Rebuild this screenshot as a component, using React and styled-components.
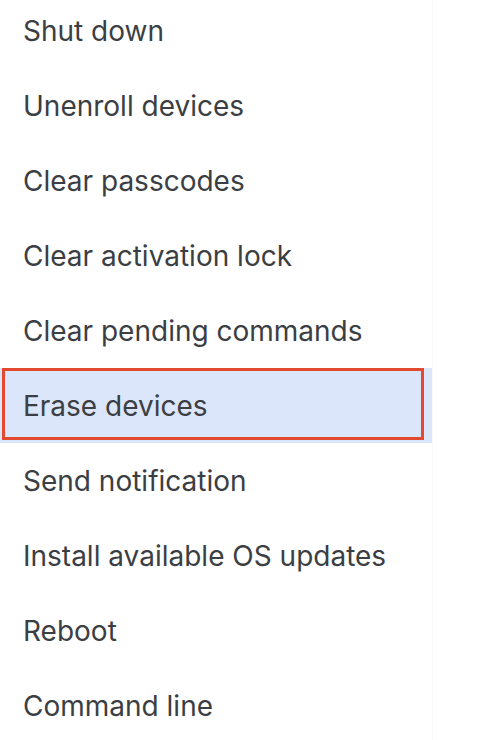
import React from 'react'
import styled, { createGlobalStyle } from 'styled-components'

const actions = [
  'Shut down',
  'Unenroll devices',
  'Clear passcodes',
  'Clear activation lock',
  'Clear pending commands',
  'Erase devices',
  'Send notification',
  'Install available OS updates',
  'Reboot',
  'Command line',
]

const selected = 'Erase devices'

const Global = createGlobalStyle`
  html, body {
    margin: 0;
    background: #ffffff;
    overflow: hidden;
  }
`

const Menu = styled.ul`
  list-style: none;
  margin: -7px 0 0 0;
  padding: 0;
  width: 432px;
  border-right: 1px solid #f8f8fa;
  font-family: Inter, "Noto Sans", sans-serif;
`

const Row = styled.li`
  position: relative;
  height: 75px;
  display: flex;
  align-items: center;
  padding-left: 23px;
  font-size: 28px;
  color: #3b3e43;
  background: ${p => (p.$active ? '#dbe6fb' : 'transparent')};

  &::after {
    content: '';
    display: ${p => (p.$active ? 'block' : 'none')};
    position: absolute;
    left: 2px;
    right: 8px;
    top: 0;
    bottom: 3px;
    border: 3px solid #e2492f;
  }
`

const App = () => {
  return (
    <>
      <Global />
      <Menu>
        {actions.map(a => (
          <Row key={a} $active={a === selected}>{a}</Row>
        ))}
      </Menu>
    </>
  )
}

export default App
